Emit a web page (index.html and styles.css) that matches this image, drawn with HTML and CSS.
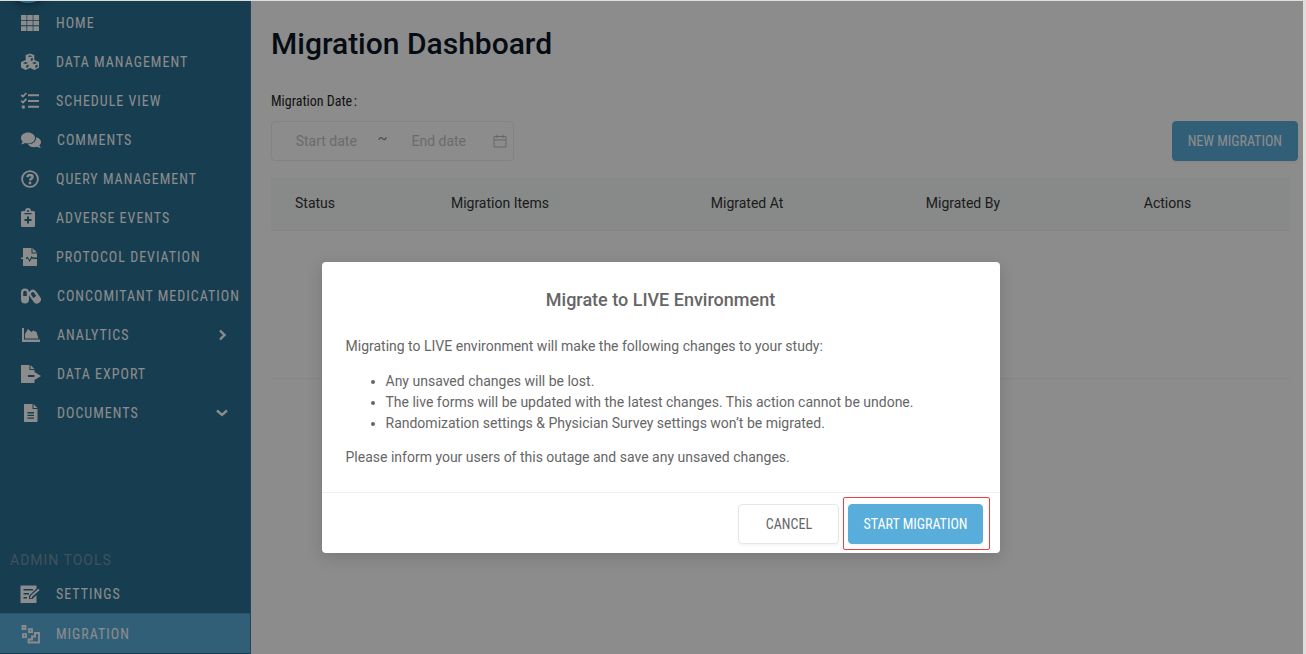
FILE: index.html
```html
<!DOCTYPE html>
<html lang="en">
<head>
<meta charset="utf-8">
<meta name="viewport" content="width=device-width, initial-scale=1">
<title>Migration Dashboard</title>
<link rel="stylesheet" href="styles.css">
</head>
<body>
<div class="app">
  <aside class="sidebar">
    <span class="logo"></span>
    <nav class="menu" aria-label="Study">
      <a class="item" href="#"><svg class="icon" viewBox="0 0 20 20"><path d="M1 2h5.500v5H1zM7.200 2h5.500v5H7.200zM13.400 2H19v5h-5.600zM1 7.800h5.500v4.500H1zM7.200 7.800h5.500v4.500H7.200zM13.400 7.800H19v4.500h-5.600zM1 13.200h5.500V18H1zM7.200 13.200h5.500V18H7.200zM13.400 13.200H19V18h-5.600z"/></svg><span>HOME</span></a>
      <a class="item" href="#"><svg class="icon" viewBox="0 0 20 20"><path fill-rule="evenodd" d="M10 1.500 14.300 3v5L19 10v5.500L14.500 18 10 16l-4.500 2L1 15.500V10l4.700-2V3zM7.600 4.200 10 5.100l2.400-.9L10 3.300zM10.800 6.600v2.500l2-.8V5.800zM3 10.900l2.500 1 2.500-1-2.500-1zM12 10.900l2.500 1 2.500-1-2.500-1zM6.300 13.400V16l2.200-1.100v-2.400zM15.300 13.400V16l2.200-1.100v-2.400z"/></svg><span>DATA MANAGEMENT</span></a>
      <a class="item" href="#"><svg class="icon" viewBox="0 0 20 20"><path d="M8 3.200h11v2H8zM8 9h11v2H8zM8 14.800h11v2H8z"/><circle cx="3.300" cy="16" r="1.800"/><path class="line" d="m1.300 4 1.700 1.600L6.400 2M1.300 9.800 3 11.400l3.400-3.600"/></svg><span>SCHEDULE VIEW</span></a>
      <a class="item" href="#"><svg class="icon icon-wide" viewBox="0 0 21 20"><path d="M8 2.500c4 0 7 2.400 7 5.500s-3 5.500-7 5.500c-1.100 0-2.100-.2-3-.5-1.100.8-2.500 1.300-4 1.300.9-1 1.400-2 1.600-2.900C1.600 10.500 1 9.300 1 8c0-3.100 3-5.500 7-5.500z"/><path d="M16 7.300c2.900.5 5 2.300 5 4.700 0 1.300-.6 2.400-1.600 3.300.2.900.7 1.800 1.600 2.700-1.500 0-2.900-.5-4-1.200-.9.300-1.900.4-3 .4-2.700 0-5-1.200-6.100-3 4.600 0 8.200-2.700 8.200-6.200z"/></svg><span>COMMENTS</span></a>
      <a class="item" href="#"><svg class="icon" viewBox="0 0 20 20"><circle class="line" cx="10" cy="10" r="7.900"/><path class="line thick" d="M7.400 8.200C7.600 6.600 8.600 6 10.100 6c1.500 0 2.500.8 2.500 1.900 0 1.700-2.500 1.900-2.500 3.600"/><circle cx="10" cy="14" r="1.400"/></svg><span>QUERY MANAGEMENT</span></a>
      <a class="item" href="#"><svg class="icon" viewBox="0 0 20 20"><path fill-rule="evenodd" d="M2.500 3H5a3 3 0 0 1 6 0h2.500q1.500 0 1.500 1.500v13q0 1.500-1.500 1.500h-11Q1 19 1 17.500v-13Q1 3 2.500 3zM7 3a1 1 0 0 0 2 0 1 1 0 0 0-2 0zM4.500 5v1.200h7V5zM7 8.500V11H4.500v2H7v2.500h2V13h2.500v-2H9V8.500z"/></svg><span>ADVERSE EVENTS</span></a>
      <a class="item" href="#"><svg class="icon" viewBox="0 0 20 20"><path d="M3 1h8.500v5.500H17v4h-4L11.500 9 9.500 13l-2-3.500-1 1H3zM12.500 1 17 5.500h-4.500zM3 12h4l.600-.800L9.500 15l2.500-4 .8 1H17v7H3zM1 10.500h5V12H1z"/></svg><span>PROTOCOL DEVIATION</span></a>
      <a class="item" href="#"><svg class="icon icon-wide" viewBox="0 0 21 20"><path fill-rule="evenodd" d="M5 2.500a4 4 0 0 1 4 4v7a4 4 0 0 1-8 0v-7a4 4 0 0 1 4-4zM3.200 6.500V10h3.600V6.500a1.800 1.800 0 0 0-3.600 0z"/><path fill-rule="evenodd" d="M10.500 4.500a4 4 0 0 1 5.600.9l4 5.700a4 4 0 0 1-6.600 4.600l-4-5.700a4 4 0 0 1 1-5.500zM11.300 9l2.100 2.900 2.900-2-2-2.900a1.800 1.800 0 0 0-3 2z"/></svg><span>CONCOMITANT MEDICATION</span></a>
      <a class="item" href="#"><svg class="icon icon-wide" viewBox="0 0 21 20"><path d="M2 3h2v11.500h16V17H2zM5 13.500V9l3-5 3.500 3 2-1.500 3 1.500 2 6.500z"/></svg><span>ANALYTICS</span><svg class="chevron" viewBox="0 0 12 12"><path d="m4 1.500 4.500 4.500L4 10.500"/></svg></a>
      <a class="item" href="#"><svg class="icon icon-wide" viewBox="0 0 21 20"><path d="M1 1h8.500v5h5v5H8v2h6.500v6H1zM10.500 1l4 4h-4zM14.500 11V8l6.500 4-6.500 4v-3z"/></svg><span>DATA EXPORT</span></a>
      <a class="item" href="#"><svg class="icon icon-wide" viewBox="0 0 21 20"><path fill-rule="evenodd" d="M4 1h8.500v5h5v13H4zM13.500 1l4 4h-4zM7.500 9v1.400H14V9zM7.500 11.700V13H14v-1.300zM7.500 14.400v1.300H14v-1.300z"/></svg><span>DOCUMENTS</span><svg class="chevron" viewBox="0 0 12 12"><path d="M1 3.500 6 8l5-4.500"/></svg></a>
    </nav>
    <nav class="menu admin" aria-labelledby="admin-title">
      <h2 class="admin-title" id="admin-title">ADMIN TOOLS</h2>
      <a class="item" href="#"><svg class="icon" viewBox="0 0 20 20"><path fill-rule="evenodd" d="M.500 1.500h16v3L15 6 9 11.800V15h3.500l4-4v8H.500zM3.500 5v1.500H13V5zM3.500 9v1.500H9V9zM3.500 13v1.500H7V13z"/><path class="line" d="m10.500 14 1.500-2.500 7-6"/></svg><span>SETTINGS</span></a>
      <a class="item active" href="#" aria-current="page"><svg class="icon" viewBox="0 0 20 20"><path class="line" d="M2.500 2h3v3h-3zM9 5.200h3v3H9zM3 10.200h3v3H3zM8.500 18.500v-3h3.500v-3h3V9h4v9.500z"/></svg><span>MIGRATION</span></a>
    </nav>
  </aside>
  <main class="content">
    <h1 class="title">Migration Dashboard</h1>
    <label class="label" for="start">Migration Date&#8202;:</label>
    <div class="toolbar">
      <div class="range">
        <input class="date" id="start" type="text" placeholder="Start date">
        <span class="tilde">~</span>
        <input class="date" type="text" placeholder="End date" aria-label="End date">
        <svg class="calendar" viewBox="0 0 14 14"><path d="M1 2.500h12v10.500H1zM1 6h12M4 .500V4M10 .500V4"/></svg>
      </div>
      <button class="button primary" type="button">NEW MIGRATION</button>
    </div>
    <table class="table">
      <thead><tr><th class="c-status">Status</th><th class="c-items">Migration Items</th><th class="c-at">Migrated At</th><th class="c-by">Migrated By</th><th>Actions</th></tr></thead>
      <tbody><tr><td class="empty" colspan="5"></td></tr></tbody>
    </table>
  </main>
  <div class="overlay">
    <section class="modal" role="dialog" aria-modal="true" aria-labelledby="modal-title">
      <div class="modal-body">
        <h2 class="modal-title" id="modal-title">Migrate to LIVE Environment</h2>
        <p class="text">Migrating to LIVE environment will make the following changes to your study:</p>
        <ul class="changes">
          <li>Any unsaved changes will be lost.</li>
          <li>The live forms will be updated with the latest changes. This action cannot be undone.</li>
          <li>Randomization settings &amp; Physician Survey settings won’t be migrated.</li>
        </ul>
        <p class="text">Please inform your users of this outage and save any unsaved changes.</p>
      </div>
      <footer class="modal-footer">
        <button class="button" type="button">CANCEL</button>
        <div class="highlight"><button class="button primary" type="button">START MIGRATION</button></div>
      </footer>
    </section>
  </div>
</div>
</body>
</html>
```
FILE: styles.css
```css
* { box-sizing: border-box; }
body {
  margin: 0;
  padding: 1px 3px 0 0;
  background: #dededc;
  font-family: Roboto, "Liberation Sans", sans-serif;
  font-size: 14px;
  color: #666;
}
.app {
  position: relative;
  display: flex;
  min-height: calc(100vh - 1px);
  background: #fff;
}
.sidebar {
  position: relative;
  display: flex;
  flex-direction: column;
  flex: 0 0 251px;
  padding: 2px 0 1px;
  overflow: hidden;
  background: #286f93;
  border-right: 1px solid #3f7d9e;
}
.logo {
  position: absolute;
  top: -38px;
  left: 8px;
  width: 40px;
  height: 40px;
  border-radius: 50%;
  background: #4cc0f5;
  box-shadow: 0 2px 10px rgba(0, 0, 0, 0.4);
}
.item {
  display: flex;
  align-items: center;
  gap: 16px;
  height: 39px;
  padding: 0 22px 0 20px;
  color: #fff;
  font-family: "Roboto Condensed", Roboto, sans-serif;
  letter-spacing: 1px;
  white-space: nowrap;
  text-decoration: none;
}
.item.active { background: #59adda; border-top: 1px solid #4a9cc7; height: 40px; }
.icon { flex: none; width: 20px; height: 20px; fill: #fff; }
.icon-wide { width: 21px; }
.line { fill: none; stroke: #fff; stroke-width: 1.8; }
.thick { stroke-width: 2.4; }
.chevron {
  width: 12px;
  height: 12px;
  margin-left: auto;
  fill: none;
  stroke: #fff;
  stroke-width: 2.4;
}
.admin { margin-top: auto; }
.admin-title {
  margin: 0;
  padding: 0 10px 5px;
  font-size: 14px;
  font-weight: 400;
  line-height: 18px;
  letter-spacing: 1px;
  color: #7896a7;
}
.content { flex: 1; min-width: 0; padding: 24px 5px 0 20px; }
.title {
  margin: 0;
  font-size: 30px;
  font-weight: 500;
  line-height: 38px;
  color: #0b1526;
}
.label {
  display: block;
  margin: 29px 0 11px;
  font-family: "Roboto Condensed", Roboto, sans-serif;
  line-height: 18px;
  color: #262626;
}
.toolbar { display: flex; justify-content: space-between; }
.range {
  display: flex;
  align-items: center;
  width: 243px;
  height: 40px;
  padding: 0 6px 0 12px;
  border: 1px solid #eee;
  border-radius: 4px;
}
.date {
  flex: 1;
  min-width: 0;
  padding: 0;
  border: 0;
  background: none;
  font: inherit;
  text-align: center;
}
.date::placeholder { color: #c4c4c4; opacity: 1; }
.tilde { width: 28px; padding-bottom: 6px; text-align: center; color: #888; }
.calendar { width: 14px; height: 14px; margin-left: 12px; fill: none; stroke: #bbb; }
.button {
  height: 40px;
  padding: 0 15px;
  border: 1px solid #e6e6e6;
  border-radius: 4px;
  background: #fff;
  box-shadow: 0 2px 2px rgba(0, 0, 0, 0.04);
  font-family: "Roboto Condensed", Roboto, sans-serif;
  font-size: 14px;
  color: #666;
}
.primary { border-color: #59adda; background: #59adda; color: #fff; }
.table {
  width: calc(100% - 8px);
  margin-top: 16px;
  border-collapse: collapse;
  table-layout: fixed;
}
.table th {
  height: 53px;
  padding: 0 24px;
  border-bottom: 1px solid #f3f3f3;
  background: #f8fbfa;
  font-weight: 400;
  text-align: left;
  color: #333;
}
.c-status { width: 15.3%; }
.c-items { width: 25.5%; }
.c-at { width: 21.1%; }
.c-by { width: 21.4%; }
.empty { height: 148px; border-bottom: 1px solid #f3f3f3; }
.overlay {
  position: absolute;
  inset: 0;
  display: flex;
  justify-content: center;
  align-items: flex-start;
  padding: 261px 0 0 18px;
  background: rgba(0, 0, 0, 0.45);
}
.modal {
  width: 678px;
  max-width: 100%;
  border-radius: 4px;
  background: #fff;
  box-shadow: 0 4px 16px rgba(0, 0, 0, 0.15);
}
.modal-body { padding: 26px 24px 24px; }
.modal-title {
  margin: 0 0 24px;
  font-size: 18px;
  font-weight: 500;
  line-height: 24px;
  text-align: center;
}
.text { margin: 0; line-height: 21px; }
.changes { margin: 14px 0 13px; padding-left: 40px; line-height: 21px; }
.modal-footer {
  display: flex;
  justify-content: flex-end;
  align-items: center;
  gap: 4px;
  padding: 4px 10px 3px;
  border-top: 1px solid #efefef;
}
.modal-footer .button { padding: 0 14px; }
.modal-footer > .button { min-width: 101px; }
.highlight { padding: 6px 6px 5px 4px; border: 1px solid #f23c3c; border-radius: 2px; }
```
